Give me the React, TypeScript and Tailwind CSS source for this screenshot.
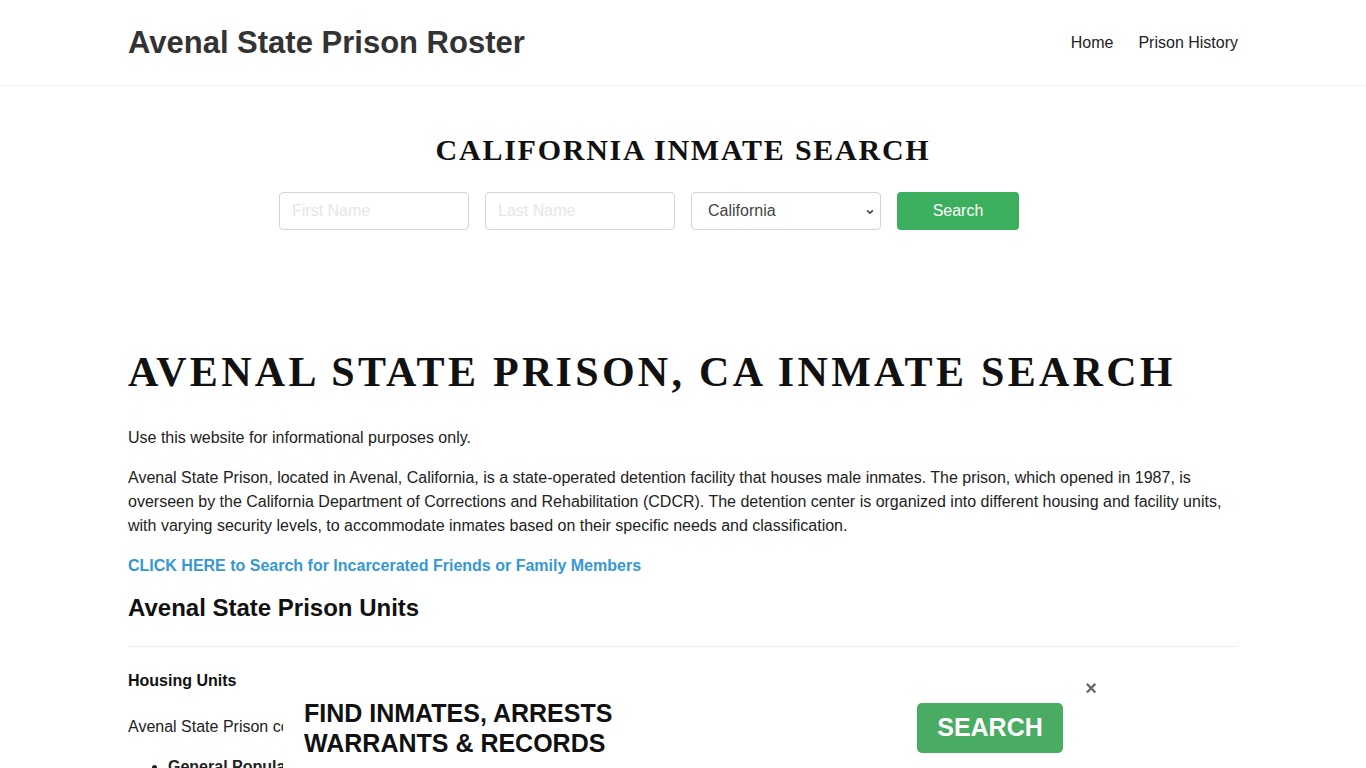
import React from 'react';

const sans = { fontFamily: '"Liberation Sans", Arial, sans-serif' };

const Header: React.FC = () => (
  <header className="border-b border-[#f0f0f0]">
    <div className="mx-auto w-[1110px] h-[85px] flex items-center justify-between">
      <a href="#" className="text-[31px] font-bold text-[#333] leading-none">Avenal State Prison Roster</a>
      <nav className="flex gap-[25px] text-[16px] text-[#222]">
        <a href="#" className="ml-[1px]">Home</a>
        <a href="#">Prison History</a>
      </nav>
    </div>
  </header>
);

const SearchBox: React.FC = () => (
  <section className="pt-[46px]">
    <h2 className="text-center font-['Liberation_Serif',serif] font-bold text-[30px] leading-[36px] tracking-[1.75px] text-[#111]">
      CALIFORNIA INMATE SEARCH
    </h2>
    <form className="mx-auto w-[1110px] mt-[24px] pl-[151px] flex gap-4">
      <input
        placeholder="First Name"
        className="w-[190px] h-[38px] px-3 border border-[#d4d4d4] rounded-[4px] text-[16px] placeholder:text-[#e6e6e6]"
      />
      <input
        placeholder="Last Name"
        className="w-[190px] h-[38px] px-3 border border-[#d4d4d4] rounded-[4px] text-[16px] placeholder:text-[#e6e6e6]"
      />
      <div className="relative w-[190px] h-[38px] border border-[#d4d4d4] rounded-[4px] flex items-center pl-4 text-[16px] text-[#444]">
        California
        <svg className="absolute right-[6px] top-[15px] w-[8px] h-[8px]" viewBox="0 0 10 10" fill="none" stroke="#444" strokeWidth="2">
          <path d="M1.5 3l3.5 3.5L8.5 3" />
        </svg>
      </div>
      <button type="button" className="w-[122px] h-[38px] rounded-[4px] bg-[#3caf5f] text-white text-[16px]">
        Search
      </button>
    </form>
  </section>
);

const AdBar: React.FC = () => (
  <div className="fixed bottom-0 left-[283px] w-[800px] h-[76px] bg-white flex items-center justify-between pl-[21px] pr-[20px]">
    <p className="mt-[-4px] text-[25px] leading-[30px] font-bold text-[#111]">
      FIND INMATES, ARRESTS
      <br />
      WARRANTS &amp; RECORDS
    </p>
    <button type="button" className="mt-[-4px] w-[146px] h-[50px] rounded-[5px] bg-[#4aab63] text-white text-[25px] font-bold">
      SEARCH
    </button>
    <span className="absolute right-[-14px] top-[-14px] text-[20px] leading-none text-[#666] font-bold">×</span>
  </div>
);

export default function App() {
  return (
    <div style={sans} className="min-h-screen bg-white text-[#222]">
      <Header />
      <SearchBox />
      <main className="mx-auto w-[1110px] pt-[117px] pb-24">
        <h1 className="font-['Liberation_Serif',serif] font-bold text-[42px] leading-[50px] tracking-[3.3px] text-[#111]">
          AVENAL STATE PRISON, CA INMATE SEARCH
        </h1>
        <p className="mt-[29px] text-[16px] leading-[24px]">Use this website for informational purposes only.</p>
        <p className="mt-[16px] text-[16px] leading-[24px]">
          Avenal State Prison, located in Avenal, California, is a state-operated detention facility that houses male inmates. The prison, which opened in 1987, is overseen by the California Department of Corrections and Rehabilitation (CDCR). The detention center is organized into different housing and facility units, with varying security levels, to accommodate inmates based on their specific needs and classification.
        </p>
        <p className="mt-[16px] text-[16px] leading-[24px]">
          <a href="#" className="font-bold text-[#3598d5]">CLICK HERE to Search for Incarcerated Friends or Family Members</a>
        </p>
        <h2 className="mt-[15px] text-[24px] leading-[29px] font-bold text-[#111]">Avenal State Prison Units</h2>
        <hr className="mt-[24px] border-t border-[#ececec]" />
        <h3 className="mt-[22px] text-[16px] leading-[24px] font-bold text-[#111]">Housing Units</h3>
        <p className="mt-[22px] text-[16px] leading-[24px]">
          Avenal State Prison consists of several housing units designed to accommodate inmates of varying security levels.
        </p>
        <ul className="mt-[16px] list-disc pl-[40px] text-[16px] leading-[24px]">
          <li><b>General Population Units:</b> These units house the majority of inmates at the facility.</li>
          <li><b>Administrative Segregation:</b> Used for inmates who require separation from the general population.</li>
        </ul>
      </main>
      <AdBar />
    </div>
  );
}
